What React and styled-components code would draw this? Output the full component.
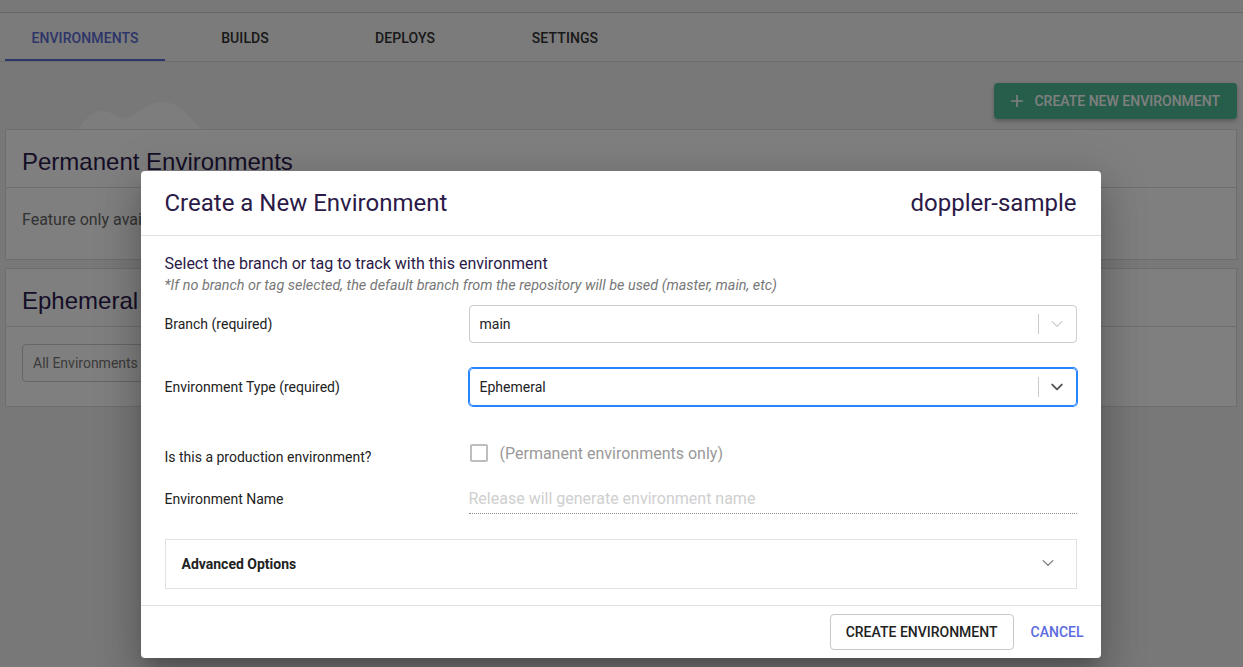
import React from "react";
import styled, {createGlobalStyle} from "styled-components";

const GlobalStyle = createGlobalStyle`
  html, body {
    margin: 0;
    padding: 0;
    background: #f0f0f0;
    font-family: Roboto, "Liberation Sans", Arial, sans-serif;
    overflow: hidden;
  }
  * { box-sizing: border-box; }
`

const Page = styled.div`
  position: relative;
  width: 1243px;
  height: 667px;
  background: #f0f0f0;
`

const TopStrip = styled.div`
  height: 13px;
  border-bottom: 1px solid #d0d0d0;
`

const TabBar = styled.div`
  display: flex;
  height: 49px;
  padding-left: 5px;
  background: #f6f6f6;
  border-bottom: 1px solid #dadada;
`

const Tab = styled.div`
  width: 160px;
  display: flex;
  align-items: center;
  justify-content: center;
  padding-top: 3px;
  font-size: 14px;
  font-weight: 500;
  letter-spacing: 0.1px;
  text-transform: uppercase;
  color: ${p => p.active ? "#5a6ad2" : "#333"};
  border-bottom: 2px solid ${p => p.active ? "#5a6ad2" : "transparent"};
`

const Content = styled.div`
  padding: 0 6px 0 5px;
`

const ActionRow = styled.div`
  position: relative;
  display: flex;
  justify-content: flex-end;
  padding-top: 21px;
`

const Hills = styled.svg`
  position: absolute;
  left: 72px;
  bottom: -11px;
`

const GreenButton = styled.button`
  display: flex;
  align-items: center;
  gap: 10px;
  height: 36px;
  padding: 0 17px 0 16px;
  border: none;
  border-radius: 4px;
  background: #4ebc96;
  color: #ffffff;
  font-family: Roboto, sans-serif;
  font-size: 14px;
  font-weight: 500;
  text-transform: uppercase;
  box-shadow: 0 2px 4px rgba(0,0,0,0.25);
`

const Card = styled.div`
  position: relative;
  margin-top: ${p => p.top}px;
  background: #fff;
  border: 1px solid #dcdcdc;
`

const CardHeader = styled.div`
  height: 58px;
  display: flex;
  align-items: center;
  padding: 6px 16px 0;
  border-bottom: 1px solid #dcdcdc;
  font-family: "Liberation Sans", Arial, sans-serif;
  font-size: 24px;
  color: #2d1b4e;
`

const CardBody = styled.div`
  height: ${p => p.h}px;
  padding: ${p => p.pad};
  font-size: 16px;
  line-height: 20px;
  color: #666;
`

const FilterSelect = styled.div`
  width: 200px;
  height: 38px;
  display: flex;
  align-items: center;
  padding: 0 10px;
  border: 1px solid #ccc;
  border-radius: 4px;
  font-size: 14px;
  color: #777;
`

const Overlay = styled.div`
  position: absolute;
  inset: 0;
  background: rgba(0, 0, 0, 0.5);
  display: flex;
  justify-content: center;
  align-items: flex-start;
  padding-top: 171px;
`

const Dialog = styled.div`
  width: 960px;
  margin-left: -2px;
  background: #fff;
  border-radius: 4px;
  box-shadow: 0px 11px 15px -7px rgba(0,0,0,0.2), 0px 24px 38px 3px rgba(0,0,0,0.14), 0px 9px 46px 8px rgba(0,0,0,0.12);
`

const DialogHeader = styled.div`
  height: 65px;
  display: flex;
  align-items: center;
  justify-content: space-between;
  padding: 0 24px;
  border-bottom: 1px solid #e0e0e0;
  font-size: 24px;
  color: #2b1a47;
`

const DialogBody = styled.div`
  padding: 18px 24px 16px;
`

const Heading = styled.div`
  font-size: 16px;
  line-height: 20px;
  color: #2b1a47;
`

const Note = styled.div`
  margin-top: 3px;
  font-size: 14.4px;
  line-height: 18px;
  font-style: italic;
  color: #777;
`

const FormRow = styled.div`
  display: grid;
  grid-template-columns: 304px 1fr;
  align-items: ${p => p.align || "center"};
  margin-top: ${p => p.top}px;
`

const Label = styled.div`
  font-size: 14px;
  line-height: 20px;
  color: #222;
  margin-top: ${p => p.offset || 0}px;
`

const SelectBox = styled.div`
  height: 38px;
  display: flex;
  align-items: center;
  border-radius: 4px;
  border: 1px solid ${p => p.focused ? "#2684ff" : "#cccccc"};
  box-shadow: ${p => p.focused ? "0 0 0 1px #2684ff" : "none"};
  font-size: 14px;
  color: #222;
`

const SelectValue = styled.div`
  flex: 1;
  padding-left: 10px;
`

const Separator = styled.span`
  width: 1px;
  height: 20px;
  background: #cccccc;
`

const Indicator = styled.div`
  width: 37px;
  display: flex;
  justify-content: center;
  color: ${p => p.focused ? "#555" : "#cccccc"};
`

const CheckRow = styled.div`
  display: flex;
  align-items: center;
  gap: 12px;
  height: 24px;
  padding-left: 1px;
  font-size: 16px;
  color: #999;
`

const Checkbox = styled.span`
  width: 18px;
  height: 18px;
  border: 2px solid #bdbdbd;
  border-radius: 2px;
`

const TextInput = styled.div`
  height: 31px;
  display: flex;
  align-items: center;
  border-bottom: 1px dotted #8a8a8a;
  font-size: 16px;
  color: #cfcfcf;
`

const Accordion = styled.div`
  margin-top: 25px;
  height: 50px;
  display: flex;
  align-items: center;
  justify-content: space-between;
  padding: 0 20px 0 16px;
  border: 1px solid #e2e2e2;
  font-size: 14px;
  font-weight: 700;
  color: #222;
`

const DialogFooter = styled.div`
  height: 53px;
  display: flex;
  align-items: center;
  justify-content: flex-end;
  gap: 9px;
  padding: 0 9px;
  border-top: 1px solid #e0e0e0;
`

const OutlineButton = styled.button`
  height: 36px;
  padding: 0 15px;
  background: #fff;
  border: 1px solid #c8c8c8;
  border-radius: 4px;
  font-family: Roboto, sans-serif;
  font-size: 14px;
  font-weight: 500;
  color: #222;
  text-transform: uppercase;
`

const TextButton = styled.button`
  height: 36px;
  padding: 0 8px;
  background: none;
  border: none;
  font-family: Roboto, sans-serif;
  font-size: 14px;
  font-weight: 500;
  color: #5c6bde;
  text-transform: uppercase;
`

const Chevron = ({size = 14, weight = 2}) => (
  <svg width={size} height={size} viewBox="0 0 20 20" fill="none">
    <path d="M4 7 L10 13 L16 7" stroke="currentColor" strokeWidth={weight} strokeLinecap="round" strokeLinejoin="round"/>
  </svg>
);

const tabs = ["Environments", "Builds", "Deploys", "Settings"];

const App = () => {
  return (
    <Page>
      <GlobalStyle/>
      <TopStrip/>
      <TabBar>
        {tabs.map((t, i) => (
          <Tab key={t} active={i === 0}>{t}</Tab>
        ))}
      </TabBar>
      <Content>
        <ActionRow>
          <Hills width="125" height="31" viewBox="0 0 125 31">
            <path d="M0 31 C8 20 16 12 25 12 C34 12 40 19 48 19 C58 19 70 3 86 3 C100 3 112 16 125 31 Z" fill="#fbfbfb"/>
          </Hills>
          <GreenButton>
            <svg width="14" height="14" viewBox="0 0 14 14">
              <path d="M7 1 V13 M1 7 H13" stroke="currentColor" strokeWidth="1.6"/>
            </svg>
            Create New Environment
          </GreenButton>
        </ActionRow>
        <Card top={10}>
          <CardHeader>Permanent Environments</CardHeader>
          <CardBody h={71} pad="22px 16px">Feature only available on paid plans</CardBody>
        </Card>
        <Card top={8}>
          <CardHeader>Ephemeral Environments</CardHeader>
          <CardBody h={79} pad="17px 16px">
            <FilterSelect>All Environments</FilterSelect>
          </CardBody>
        </Card>
      </Content>

      <Overlay>
        <Dialog>
          <DialogHeader>
            <span>Create a New Environment</span>
            <span>doppler-sample</span>
          </DialogHeader>
          <DialogBody>
            <Heading>Select the branch or tag to track with this environment</Heading>
            <Note>*If no branch or tag selected, the default branch from the repository will be used (master, main, etc)</Note>

            <FormRow top={10}>
              <Label>Branch (required)</Label>
              <SelectBox>
                <SelectValue>main</SelectValue>
                <Separator/>
                <Indicator><Chevron size={16} weight={1.6}/></Indicator>
              </SelectBox>
            </FormRow>

            <FormRow top={25}>
              <Label>Environment Type (required)</Label>
              <SelectBox focused>
                <SelectValue>Ephemeral</SelectValue>
                <Separator/>
                <Indicator focused><Chevron size={16} weight={2.4}/></Indicator>
              </SelectBox>
            </FormRow>

            <FormRow top={35} align="start">
              <Label offset={6}>Is this a production environment?</Label>
              <CheckRow>
                <Checkbox/>
                (Permanent environments only)
              </CheckRow>
            </FormRow>

            <FormRow top={16}>
              <Label>Environment Name</Label>
              <TextInput>Release will generate environment name</TextInput>
            </FormRow>

            <Accordion>
              <span>Advanced Options</span>
              <span style={{color: "#777"}}><Chevron size={16} weight={1.5}/></span>
            </Accordion>
          </DialogBody>
          <DialogFooter>
            <OutlineButton>Create Environment</OutlineButton>
            <TextButton>Cancel</TextButton>
          </DialogFooter>
        </Dialog>
      </Overlay>
    </Page>
  );
};

export default App;
